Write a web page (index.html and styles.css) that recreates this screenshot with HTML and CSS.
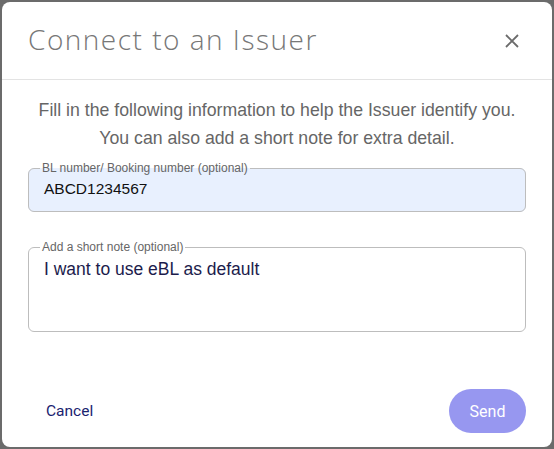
FILE: index.html
```html
<!DOCTYPE html>
<html>
<head>
<meta charset="utf-8">
<link rel="stylesheet" href="styles.css">
</head>
<body>
<div class="modal">
  <div class="header">
    <h1 class="title">Connect to an Issuer</h1>
    <button class="close" aria-label="close">
      <svg width="16" height="16" viewBox="0 0 16 16"><path d="M2 2 L14 14 M14 2 L2 14" stroke="#6b6b6b" stroke-width="1.8" fill="none"/></svg>
    </button>
  </div>
  <div class="body">
    <p class="intro">Fill in the following information to help the Issuer identify you.<br>You can also add a short note for extra detail.</p>
    <fieldset class="field field-filled">
      <legend>BL number/ Booking number (optional)</legend>
      <div class="value">ABCD1234567</div>
    </fieldset>
    <fieldset class="field field-note">
      <legend>Add a short note (optional)</legend>
      <div class="value note">I want to use eBL as default</div>
    </fieldset>
  </div>
  <div class="footer">
    <button class="cancel">Cancel</button>
    <button class="send">Send</button>
  </div>
</div>
</body>
</html>
```
FILE: styles.css
```css
html, body {
  margin: 0;
  padding: 0;
}
body {
  background: #6b6b6b;
  width: 554px;
  height: 449px;
  overflow: hidden;
  font-family: "Liberation Sans", Arial, sans-serif;
}
.modal {
  margin: 2px;
  width: 550px;
  height: 445px;
  background: #fff;
  border-radius: 8px;
  display: flex;
  flex-direction: column;
  box-sizing: border-box;
}
.header {
  height: 77px;
  border-bottom: 1px solid #e3e3e3;
  display: flex;
  align-items: center;
  justify-content: space-between;
  padding: 0 32px 0 26px;
}
.title {
  margin: 0;
  font-family: "Open Sans", sans-serif;
  font-weight: 300;
  font-size: 28px;
  letter-spacing: 1.5px;
  color: #777;
  position: relative;
  top: -2px;
}
.close {
  border: 0;
  background: none;
  padding: 0;
  width: 16px;
  height: 16px;
  display: flex;
}
.body {
  padding: 0 26px;
  flex: 1;
}
.intro {
  margin: 16px 0 10px;
  text-align: center;
  font-size: 17.7px;
  line-height: 28px;
  color: #666;
}
.field {
  margin: 0;
  border: 1px solid #bdbdbd;
  border-radius: 6px;
  padding: 0 15px;
  min-width: 0;
}
.field legend {
  font-size: 12px;
  color: #666;
  padding: 0 2px;
  margin-left: -4px;
  line-height: 12px;
}
.field-filled {
  background: #e8f0fe;
  height: 50px;
  box-sizing: border-box;
}
.field-filled .value {
  font-size: 15.5px;
  color: #111;
  line-height: 20px;
  padding-top: 5px;
}
.field-note {
  margin-top: 29px;
  height: 91px;
  box-sizing: border-box;
}
.note {
  font-size: 17.5px;
  color: #1c1c4c;
  line-height: 20px;
  padding-top: 6px;
}
.footer {
  display: flex;
  align-items: center;
  justify-content: space-between;
  padding: 0 26px 14px 44px;
}
.cancel {
  border: 0;
  background: none;
  padding: 0;
  font-family: Roboto, sans-serif;
  font-size: 15.5px;
  color: #1a2370;
}
.send {
  border: 0;
  background: #9797f0;
  color: #fff;
  font-family: Roboto, sans-serif;
  font-size: 16px;
  width: 77px;
  height: 44px;
  border-radius: 22px;
}
```
